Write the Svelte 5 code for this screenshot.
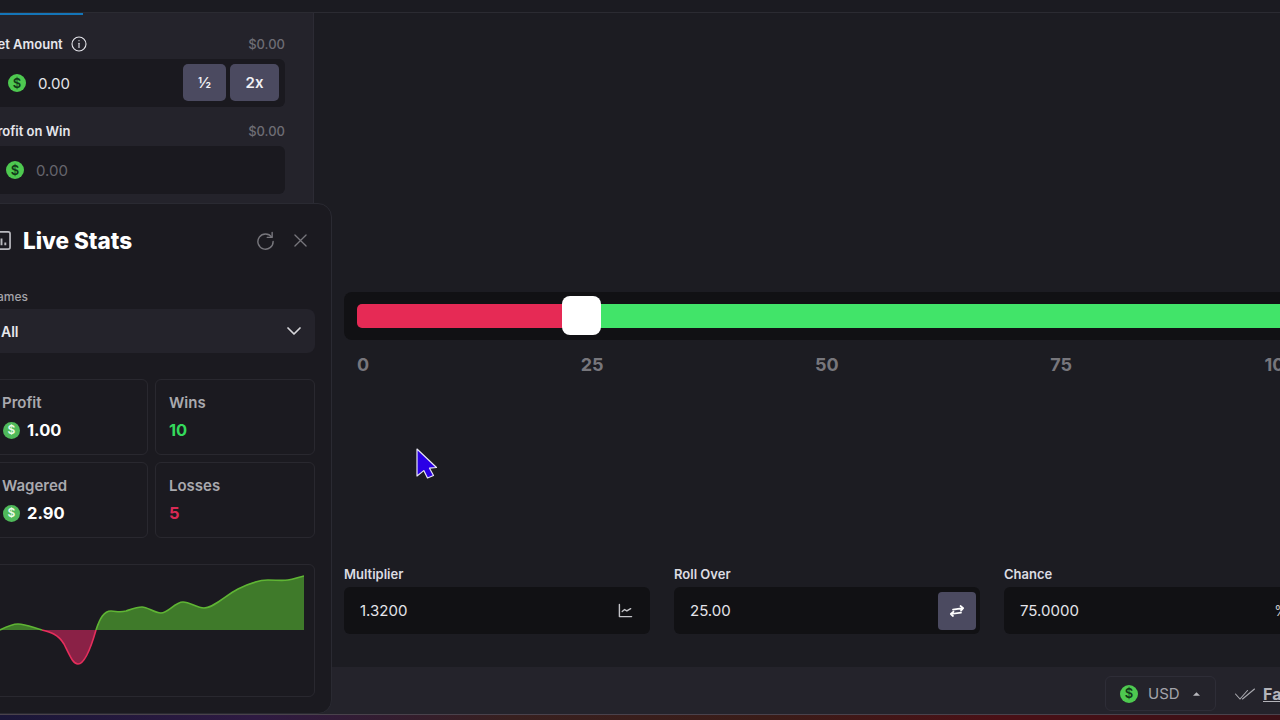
<script lang="ts">
  const ticks = ['0', '25', '50', '75', '100'];

  const stats = [
    { label: 'Profit', value: '1.00', coin: true, tone: '' },
    { label: 'Wins', value: '10', coin: false, tone: 'up' },
    { label: 'Wagered', value: '2.90', coin: true, tone: '' },
    { label: 'Losses', value: '5', coin: false, tone: 'down' }
  ];

  // chart curve, baseline sits at y=66 in the svg
  const above1 = 'M0 66C6 63 12 60 18 60C26 60 34 64 42 66Z';
  const below = 'M42 66C50 68 58 70 64 80C70 92 73 100 78 100C85 100 92 80 96 66Z';
  const above2 =
    'M96 66C100 54 104 47 111 47C116 47 119 49 126 47C132 45 137 43 142 43C148 43 154 49 161 49C168 49 175 38 183 38C190 38 197 44 204 44C214 44 226 31 238 25C250 19 258 16 268 16C276 16 282 17 288 16C294 15 299 13 304 12V66Z';
</script>

{#snippet coin(size)}
  <span class="coin" class:small={size === 'small'}>$</span>
{/snippet}

<div class="page">
  <div class="topbar"></div>

  <div class="main">
    <aside class="sidebar">
      <div class="tab-line"></div>

      <div class="field-head bet-head">
        <span class="field-title">Bet Amount
          <svg class="info" viewBox="0 0 16 16" fill="none" stroke="currentColor" stroke-width="1.1" stroke-linecap="round">
            <circle cx="8" cy="8" r="7"></circle>
            <line x1="8" y1="7.2" x2="8" y2="11.5"></line>
            <line x1="8" y1="4.6" x2="8" y2="4.7"></line>
          </svg>
        </span>
        <span class="usd">$0.00</span>
      </div>
      <div class="amount bet">
        {@render coin('')}
        <span class="amount-value">0.00</span>
        <button type="button" class="mini half">½</button>
        <button type="button" class="mini double">2x</button>
      </div>

      <div class="field-head profit-head">
        <span class="field-title">Profit on Win</span>
        <span class="usd">$0.00</span>
      </div>
      <div class="amount profit">
        {@render coin('')}
        <span class="amount-value muted">0.00</span>
      </div>
    </aside>

    <section class="stage">
      <div class="slider">
        <div class="track">
          <div class="track-lose"></div>
          <div class="track-win"></div>
          <div class="handle"></div>
        </div>
      </div>
      <div class="ticks">
        {#each ticks as t}
          <span class="tick">{t}</span>
        {/each}
      </div>

      <div class="inputs">
        <div class="input-col">
          <span class="input-label">Multiplier</span>
          <div class="input-box">
            <span>1.3200</span>
            <svg class="box-icon" viewBox="0 0 16 16" fill="none" stroke="currentColor" stroke-width="1.5" stroke-linecap="round" stroke-linejoin="round">
              <path d="M1.5 1.5v13h13"></path>
              <path d="M4.5 9l2.5-2 2.5 1.5 4-2.5"></path>
            </svg>
          </div>
        </div>
        <div class="input-col">
          <span class="input-label">Roll Over</span>
          <div class="input-box">
            <span>25.00</span>
            <button type="button" class="swap" aria-label="Swap">
              <svg viewBox="0 0 16 16" fill="none" stroke="currentColor" stroke-width="1.7" stroke-linecap="round" stroke-linejoin="round">
                <path d="M4 6.6L14 5.2M11.5 3L14.2 5.2L12 7.6"></path>
                <path d="M12 9.6L2 11M4.5 8.6L1.8 11L4 13"></path>
              </svg>
            </button>
          </div>
        </div>
        <div class="input-col">
          <span class="input-label">Chance</span>
          <div class="input-box">
            <span>75.0000</span>
            <span class="percent">%</span>
          </div>
        </div>
      </div>
    </section>
  </div>

  <footer class="footer">
    <div class="currency">
      {@render coin('')}
      <span class="currency-name">USD</span>
      <svg class="caret" viewBox="0 0 8 4"><path d="M4 0l4 4H0z" fill="currentColor"></path></svg>
    </div>
    <svg class="checks" viewBox="0 0 20 12" fill="none" stroke="currentColor" stroke-width="1.1" stroke-linecap="round">
      <path d="M0.5 6l4.5 5L12.5 2.5"></path>
      <path d="M7.5 11L19.5 1"></path>
    </svg>
    <span class="fair">Fairness</span>
  </footer>
  <div class="strip"></div>

  <!-- floating stats window -->
  <div class="stats">
    <div class="stats-head">
      <svg class="stats-icon" viewBox="0 0 20 20" fill="none" stroke="currentColor" stroke-width="1.8">
        <rect x="1" y="1" width="18" height="18" rx="2"></rect>
        <path d="M6 15v-4M10 15V8M14 15v-3" stroke-width="2"></path>
      </svg>
      <h2>Live Stats</h2>
      <svg class="head-btn refresh" viewBox="0 0 20 20" fill="none" stroke="currentColor" stroke-width="1.5" stroke-linecap="round" stroke-linejoin="round">
        <path d="M16.5 6.5A8 8 0 1 0 18 11"></path>
        <path d="M17 1.5v5.2h-5.2"></path>
      </svg>
      <svg class="head-btn close" viewBox="0 0 14 14" fill="none" stroke="currentColor" stroke-width="1.4" stroke-linecap="round">
        <path d="M1 1l12 12M13 1L1 13"></path>
      </svg>
    </div>

    <span class="games-label">Games</span>
    <div class="games-select">
      <span>All</span>
      <svg viewBox="0 0 14 8" fill="none" stroke="currentColor" stroke-width="1.7" stroke-linecap="round" stroke-linejoin="round">
        <path d="M1 1l6 6 6-6"></path>
      </svg>
    </div>

    <div class="stat-grid">
      {#each stats as s}
        <div class="stat">
          <span class="stat-label">{s.label}</span>
          <span class="stat-value {s.tone}">
            {#if s.coin}{@render coin('small')}{/if}
            {s.value}
          </span>
        </div>
      {/each}
    </div>

    <div class="chart">
      <svg viewBox="0 0 304 132" width="304" height="132">
        <path d={above1} fill="#3f7a2a"></path>
        <path d={below} fill="#8a2146"></path>
        <path d={above2} fill="#3f7a2a"></path>
        <path d="M0 66C6 63 12 60 18 60C26 60 34 64 42 66" fill="none" stroke="#5fb534" stroke-width="1.6"></path>
        <path d="M42 66C50 68 58 70 64 80C70 92 73 100 78 100C85 100 92 80 96 66" fill="none" stroke="#e62e5c" stroke-width="1.6"></path>
        <path d="M96 66C100 54 104 47 111 47C116 47 119 49 126 47C132 45 137 43 142 43C148 43 154 49 161 49C168 49 175 38 183 38C190 38 197 44 204 44C214 44 226 31 238 25C250 19 258 16 268 16C276 16 282 17 288 16C294 15 299 13 304 12" fill="none" stroke="#5fb534" stroke-width="1.6"></path>
      </svg>
    </div>
  </div>

  <svg class="cursor" viewBox="0 0 22 31" width="22" height="31">
    <path d="M1 1L20.5 19.5L13.5 20.2L17.5 27.5L11.5 30L7.8 22.6L1 28Z" fill="#2a00e6" stroke="#e8e6f5" stroke-width="1.2" stroke-linejoin="round"></path>
  </svg>
</div>

<style>
  :global(body) {
    margin: 0;
    background: #1c1c22;
  }

  .page {
    position: relative;
    display: flex;
    flex-direction: column;
    width: 1280px;
    height: 720px;
    overflow: hidden;
    font-family: Inter, 'Liberation Sans', sans-serif;
    color: #fff;
    background: #1c1c22;
  }

  .topbar {
    flex: none;
    height: 12px;
    background: #1b1b21;
    border-bottom: 1px solid #2b2b32;
  }

  .main {
    flex: 1;
    display: flex;
    min-height: 0;
  }

  .sidebar {
    flex: none;
    box-sizing: border-box;
    width: 314px;
    padding: 0 28px 0 0;
    background: #24232b;
    border-right: 1px solid #2c2b34;
  }

  .tab-line {
    width: 83px;
    height: 2px;
    background: #1475b8;
  }

  .field-head {
    display: flex;
    justify-content: space-between;
    align-items: center;
    height: 18px;
    margin-left: -11px;
  }

  .bet-head {
    margin-top: 20px;
    margin-bottom: 6px;
  }

  .profit-head {
    margin-top: 15px;
    margin-bottom: 6px;
  }

  .field-title {
    display: inline-flex;
    align-items: center;
    gap: 8px;
    font-size: 13px;
    font-weight: 600;
    color: #e6e6ec;
  }

  .info {
    width: 16px;
    height: 16px;
  }

  .usd {
    font-size: 13px;
    font-weight: 500;
    color: #6e6d75;
  }

  .amount {
    display: flex;
    align-items: center;
    height: 48px;
    background: #1a191f;
    border-radius: 6px;
    margin-left: -12px;
  }

  .bet {
    padding: 0 6px 0 20px;
  }

  .profit {
    padding: 0 6px 0 18px;
  }

  .coin {
    flex: none;
    display: inline-flex;
    align-items: center;
    justify-content: center;
    width: 18px;
    height: 18px;
    border-radius: 50%;
    background: #4ec950;
    color: #12391a;
    font-size: 13px;
    font-weight: 600;
    line-height: 1;
  }

  .coin.small {
    width: 17px;
    height: 17px;
    margin-left: 1px;
    background: #4fb95a;
    color: #eafbea;
    font-size: 12px;
  }

  .amount-value {
    flex: 1;
    margin-left: 12px;
    font-size: 15px;
    color: #e4e4ea;
  }

  .amount-value.muted {
    color: #66656d;
  }

  .mini {
    flex: none;
    height: 37px;
    margin-bottom: 2px;
    padding: 0;
    border: none;
    border-radius: 5px;
    background: #4b4a60;
    color: #f0f0f4;
    font-family: inherit;
    font-size: 15px;
    font-weight: 600;
  }

  .half {
    width: 43px;
    margin-right: 4px;
  }

  .double {
    width: 49px;
  }

  .stage {
    flex: 1;
    display: flex;
    flex-direction: column;
    min-width: 0;
    padding: 279px 0 33px 30px;
  }

  .slider {
    flex: none;
    box-sizing: border-box;
    width: 966px;
    height: 48px;
    padding: 12px 13px;
    background: #111114;
    border-radius: 8px;
  }

  .track {
    position: relative;
    display: flex;
    height: 24px;
  }

  .track-lose {
    width: 208px;
    background: #e62a55;
    border-radius: 5px 0 0 5px;
  }

  .track-win {
    flex: 1;
    background: #41e469;
  }

  .handle {
    position: absolute;
    left: 205px;
    top: -8px;
    width: 39px;
    height: 39px;
    border-radius: 8px;
    background: #fff;
  }

  .ticks {
    display: flex;
    gap: 211.5px;
    margin: 14px 0 0 13px;
  }

  .tick {
    font-size: 18px;
    font-weight: 700;
    line-height: 22px;
    color: #77767c;
  }

  .tick:last-child {
    margin-left: -19px;
  }

  .inputs {
    flex: none;
    display: grid;
    grid-template-columns: repeat(3, 306px);
    gap: 24px;
    margin-top: auto;
  }

  .input-col {
    display: flex;
    flex-direction: column;
    gap: 5px;
  }

  .input-label {
    font-size: 13px;
    font-weight: 600;
    line-height: 15px;
    color: #dcdce2;
  }

  .input-box {
    display: flex;
    align-items: center;
    justify-content: space-between;
    box-sizing: border-box;
    height: 47px;
    padding: 0 4px 0 16px;
    background: #111114;
    border-radius: 6px;
    font-size: 15px;
    color: #e4e4ea;
  }

  .box-icon {
    width: 15px;
    height: 15px;
    margin-right: 13px;
    color: #c4c4c8;
  }

  .swap {
    display: flex;
    align-items: center;
    justify-content: center;
    width: 38px;
    height: 38px;
    padding: 0;
    border: none;
    border-radius: 4px;
    background: #4b4a60;
    color: #fff;
  }

  .swap svg {
    width: 16px;
    height: 16px;
  }

  .percent {
    margin-right: 18px;
    font-size: 14px;
    color: #c4c4c8;
  }

  .footer {
    flex: none;
    display: flex;
    align-items: center;
    box-sizing: border-box;
    height: 47px;
    padding: 6px 0 0 1105px;
    background: #24232b;
    white-space: nowrap;
  }

  .currency {
    flex: none;
    display: flex;
    align-items: center;
    box-sizing: border-box;
    width: 111px;
    height: 35px;
    padding-left: 14px;
    border: 1px solid #2e2d37;
    border-radius: 6px;
  }

  .currency-name {
    margin-left: 10px;
    font-size: 15px;
    color: #a3a3aa;
  }

  .caret {
    width: 7px;
    height: 4px;
    margin-left: 13px;
    color: #b8b8be;
  }

  .checks {
    flex: none;
    width: 20px;
    height: 12px;
    margin-left: 19px;
    color: #a9a9af;
  }

  .fair {
    margin-left: 8px;
    font-size: 16px;
    font-weight: 700;
    color: #b4b4ba;
    text-decoration: underline;
  }

  .strip {
    flex: none;
    height: 6px;
    background: linear-gradient(90deg, #1a1738 0%, #2e1a42 20%, #38201f 40%, #3a1c18 60%, #4a1016 78%, #3a1016 100%);
    border-top: 1px solid #4a424c;
    box-sizing: border-box;
  }

  .stats {
    position: absolute;
    left: -29px;
    top: 203px;
    display: flex;
    flex-direction: column;
    box-sizing: border-box;
    width: 361px;
    height: 511px;
    padding: 0 16px 0 16px;
    background: #1b1a20;
    border: 1px solid #2a2a32;
    border-radius: 14px;
  }

  .stats-head {
    display: flex;
    align-items: center;
    height: 72px;
    flex: none;
    color: #fff;
  }

  .stats-icon {
    width: 19px;
    height: 19px;
    margin-left: 4px;
    color: #b9b9be;
  }

  .stats-head h2 {
    flex: 1;
    margin: 0 0 0 12px;
    font-size: 22.5px;
    font-weight: 800;
  }

  .head-btn {
    flex: none;
    color: #77767c;
  }

  .refresh {
    width: 19px;
    height: 19px;
    margin-right: 19px;
  }

  .close {
    width: 13px;
    height: 13px;
    margin-right: 8px;
  }

  .games-label {
    margin-top: 13px;
    font-size: 12px;
    line-height: 15px;
    font-weight: 500;
    color: #a3a3a9;
  }

  .games-select {
    flex: none;
    display: flex;
    align-items: center;
    justify-content: space-between;
    height: 44px;
    margin-top: 5px;
    padding: 0 14px 0 13px;
    background: #24232b;
    border-radius: 8px;
    font-size: 14px;
    font-weight: 600;
    color: #e8e8ec;
  }

  .games-select svg {
    width: 14px;
    height: 8px;
    color: #d6d6da;
  }

  .stat-grid {
    flex: none;
    display: grid;
    grid-template-columns: 160px 160px;
    grid-auto-rows: 76px;
    gap: 7px;
    margin-top: 26px;
  }

  .stat {
    display: flex;
    flex-direction: column;
    gap: 9px;
    box-sizing: border-box;
    padding: 14px 13px 0;
    border: 1px solid #29282f;
    border-radius: 6px;
  }

  .stat-label {
    font-size: 15px;
    line-height: 17px;
    font-weight: 600;
    color: #a9a9ae;
  }

  .stat-value {
    display: flex;
    align-items: center;
    gap: 7px;
    font-size: 16.5px;
    line-height: 20px;
    font-weight: 700;
    color: #fff;
  }

  .stat-value.up {
    color: #34d95c;
  }

  .stat-value.down {
    color: #d92a55;
  }

  .chart {
    flex: none;
    box-sizing: border-box;
    height: 133px;
    margin-top: 26px;
    width: 327px;
    border: 1px solid #29282f;
    border-radius: 6px;
    overflow: hidden;
  }

  .chart svg {
    display: block;
    margin: -1px 0 0 11px;
  }

  .cursor {
    position: absolute;
    left: 416px;
    top: 448px;
  }
</style>
